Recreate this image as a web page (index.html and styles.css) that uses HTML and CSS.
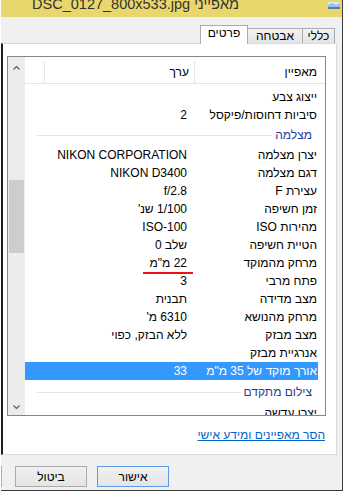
FILE: index.html
```html
<!DOCTYPE html>
<html lang="he" dir="rtl">
<head>
    <meta charset="UTF-8">
    <meta name="viewport" content="width=device-width, initial-scale=1.0">
    <title>מאפייני DSC_0127_800x533.jpg</title>
    <link rel="stylesheet" href="styles.css">
</head>
<body>

<div class="window">
    <div class="titlebar">
        <svg class="title-icon" width="12" height="7" viewBox="0 0 12 7">
            <rect x="0" y="0" width="12" height="7" fill="#9cc0e0"/>
            <path d="M0 3 L4 1 L8 3 L12 1 L12 0 L0 0 Z" fill="#d8e9f7"/>
            <rect x="0" y="5" width="12" height="2" fill="#4d7fb5"/>
        </svg>
        <span class="title-text">מאפייני DSC_0127_800x533.jpg</span>
    </div>

    <div class="client">
        <div class="tabs">
            <div class="tab tab-general">כללי</div>
            <div class="tab tab-security">אבטחה</div>
            <div class="tab tab-details active">פרטים</div>
        </div>

        <div class="panel">
            <div class="listview">
                <div class="list-main">
                    <div class="list-header">
                        <div class="hcol hcol-prop">מאפיין</div>
                        <div class="hcol hcol-val">ערך</div>
                        <div class="hcol hcol-rest"></div>
                    </div>
                    <div class="list-rows">
                        <div class="row"><div class="prop">ייצוג צבע</div><div class="val"></div></div>
                        <div class="row"><div class="prop">סיביות דחוסות/פיקסל</div><div class="val">2</div></div>
                        <div class="group"><span class="group-name">מצלמה</span><span class="group-line"></span></div>
                        <div class="row"><div class="prop">יצרן מצלמה</div><div class="val">NIKON CORPORATION</div></div>
                        <div class="row"><div class="prop">דגם מצלמה</div><div class="val">NIKON D3400</div></div>
                        <div class="row"><div class="prop">עצירת F</div><div class="val">f/2.8</div></div>
                        <div class="row"><div class="prop">זמן חשיפה</div><div class="val">1/100 שנ'</div></div>
                        <div class="row"><div class="prop">מהירות ISO</div><div class="val">ISO-100</div></div>
                        <div class="row"><div class="prop">הטיית חשיפה</div><div class="val">שלב 0</div></div>
                        <div class="row"><div class="prop">מרחק מהמוקד</div><div class="val marked">22 מ"מ</div></div>
                        <div class="row"><div class="prop">פתח מרבי</div><div class="val">3</div></div>
                        <div class="row"><div class="prop">מצב מדידה</div><div class="val">תבנית</div></div>
                        <div class="row"><div class="prop">מרחק מהנושא</div><div class="val">6310 מ'</div></div>
                        <div class="row"><div class="prop">מצב מבזק</div><div class="val">ללא הבזק, כפוי</div></div>
                        <div class="row"><div class="prop">אנרגיית מבזק</div><div class="val"></div></div>
                        <div class="row selected"><div class="prop">אורך מוקד של 35 מ"מ</div><div class="val">33</div></div>
                        <div class="group group-low"><span class="group-name">צילום מתקדם</span><span class="group-line"></span></div>
                        <div class="row"><div class="prop">יצרן עדשה</div><div class="val"></div></div>
                    </div>
                </div>
                <div class="scrollbar">
                    <div class="sb-btn sb-up">
                        <svg width="7" height="4" viewBox="0 0 7 4"><polyline points="0.5,3.5 3.5,0.5 6.5,3.5" fill="none" stroke="#606060" stroke-width="1.2"/></svg>
                    </div>
                    <div class="sb-track"><div class="sb-thumb"></div></div>
                    <div class="sb-btn">
                        <svg width="7" height="4" viewBox="0 0 7 4"><polyline points="0.5,0.5 3.5,3.5 6.5,0.5" fill="none" stroke="#606060" stroke-width="1.2"/></svg>
                    </div>
                </div>
            </div>

            <a class="remove-link" href="#">הסר מאפיינים ומידע אישי</a>
        </div>

        <div class="buttons">
            <button class="btn btn-default">אישור</button>
            <button class="btn">ביטול</button>
            <button class="btn btn-apply" aria-label="החל"></button>
        </div>
    </div>
</div>

</body>
</html>
```

FILE: styles.css
```css
* {
    box-sizing: border-box;
}
body {
    margin: 0;
    background: #fff;
    font-family: "Liberation Sans", Arial, sans-serif;
    font-size: 12px;
    color: #000;
}
.window {
    width: 342px;
    height: 491px;
    border-right: 1px solid #3b3b3b;
    border-bottom: 1px solid #3b3b3b;
    display: flex;
    flex-direction: column;
    overflow: hidden;
}

/* title bar */
.titlebar {
    height: 17px;
    flex: none;
    background: #e9d76c;
    display: flex;
    align-items: flex-start;
    overflow: hidden;
}
.title-icon {
    flex: none;
    margin-right: 2px;
    margin-top: 2px;
}
.title-text {
    margin-right: 89px;
    margin-top: -4px;
    font-size: 14.5px;
    line-height: 17px;
    color: #333;
    white-space: nowrap;
}

/* client area */
.client {
    flex: 1;
    background: #f0f0f0;
    display: flex;
    flex-direction: column;
}
.tabs {
    height: 26px;
    flex: none;
    display: flex;
    align-items: flex-end;
    padding-right: 7px;
}
.tab {
    height: 15px;
    border: 1px solid #acacac;
    border-bottom: none;
    margin-left: -1px;
    background: linear-gradient(#f2f2f2, #e4e4e4);
    text-align: center;
    line-height: 14px;
}
.tab-general {
    width: 33px;
}
.tab-security {
    width: 56px;
}
.tab-details {
    width: 48px;
}
.tab.active {
    height: 19px;
    margin-bottom: -1px;
    background: #fff;
    position: relative;
    z-index: 1;
}

.panel {
    width: 336px;
    height: 412px;
    flex: none;
    margin-right: 5px;
    background: #fff;
    border: 1px solid #d9d9d9;
    border-left: 2px solid #1e1e1e;
    display: flex;
    flex-direction: column;
    align-items: flex-start;
}

/* list view */
.listview {
    width: 319px;
    height: 360px;
    margin: 12px 10px 0 0;
    border: 1px solid #828790;
    display: flex;
    flex: none;
}
.list-main {
    flex: 1;
    overflow: hidden;
    display: flex;
    flex-direction: column;
}
.list-header {
    height: 27px;
    flex: none;
    display: flex;
    border-bottom: 1px solid #e5e5e5;
    padding-top: 4px;
}
.hcol {
    line-height: 22px;
}
.hcol-prop {
    width: 131px;
    padding-right: 8px;
    border-left: 1px solid #e5e5e5;
}
.hcol-val {
    width: 150px;
    padding-right: 5px;
    border-left: 1px solid #e5e5e5;
}
.hcol-rest {
    flex: 1;
}
.list-rows {
    padding-top: 4px;
}
.row {
    height: 18px;
    line-height: 18px;
    display: flex;
    margin-right: 7px;
    white-space: nowrap;
}
.prop {
    width: 124px;
    padding-right: 1px;
}
.val {
    width: 151px;
    padding-right: 7px;
}
.val.marked {
    position: relative;
}
.val.marked::after {
    content: "";
    position: absolute;
    right: 1px;
    top: 18px;
    width: 50px;
    height: 2px;
    background: #e3151a;
}
.row.selected {
    background: #3399ff;
    color: #fff;
}
.group {
    height: 22px;
    display: flex;
    align-items: center;
    margin-right: 13px;
    margin-left: 12px;
}
.group-low {
    height: 24px;
}
.group-name {
    color: #1e3c9a;
    white-space: nowrap;
}
.group-line {
    flex: 1;
    height: 1px;
    margin-right: 3px;
    background: #dde3ea;
}

/* scrollbar */
.scrollbar {
    width: 17px;
    flex: none;
    background: #ececec;
    display: flex;
    flex-direction: column;
}
.sb-btn {
    height: 17px;
    display: flex;
    align-items: center;
    justify-content: center;
}
.sb-up {
    padding-top: 5px;
}
.sb-track {
    flex: 1;
}
.sb-thumb {
    width: 15px;
    height: 73px;
    margin: 106px 1px 0 1px;
    background: #cdcdcd;
}

.remove-link {
    margin-top: 12px;
    margin-right: 11px;
    line-height: 14px;
    color: #0066cc;
}

/* buttons */
.buttons {
    display: flex;
    padding-top: 11px;
    padding-right: 173px;
}
.btn {
    width: 72px;
    height: 21px;
    flex: none;
    margin-left: 10px;
    border: 1px solid #acacac;
    background: linear-gradient(#f0f0f0, #e5e5e5);
    font-family: "Liberation Sans", Arial, sans-serif;
    font-size: 12px;
    color: #000;
    padding: 0;
}
.btn-default {
    border-color: #569de5;
}
.btn-apply {
    margin-left: 0;
    margin-right: 3px;
}
```
